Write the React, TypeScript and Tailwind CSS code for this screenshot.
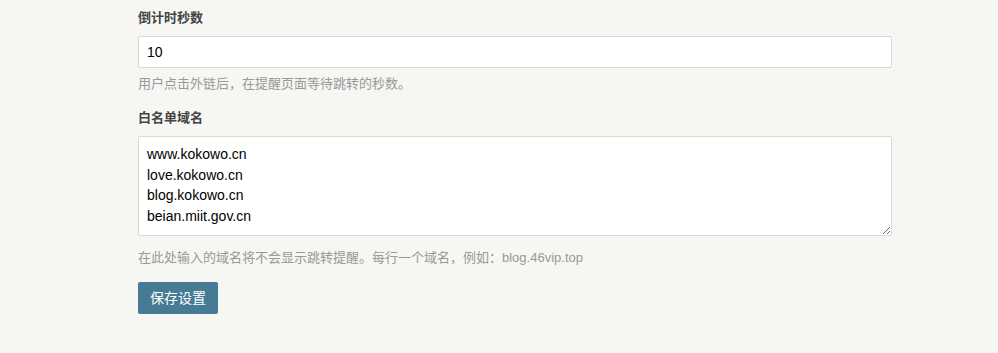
import React from "react";

export default function App() {
  const font = { fontFamily: '"Liberation Sans", Arial, "Noto Sans CJK SC", sans-serif' };
  return (
    <div className="min-h-[353px] w-full bg-[#f6f6f3]" style={font}>
      <div className="pl-[138px] pt-[8px] w-[892px]">
        <div className="flex flex-col">
          <label className="text-[13px] font-bold text-[#444] leading-[20px]">倒计时秒数</label>
          <input
            readOnly
            value="10"
            className="mt-[8px] h-[32px] w-[754px] border border-[#d9d9d6] bg-white px-[8px] text-[14px] text-black outline-none rounded-[2px]"
          />
          <p className="mt-[6px] text-[13px] text-[#999] leading-[20px]">用户点击外链后，在提醒页面等待跳转的秒数。</p>
        </div>
        <div className="mt-[14px] flex flex-col">
          <label className="text-[13px] font-bold text-[#444] leading-[20px]">白名单域名</label>
          <textarea
            readOnly
            value={"www.kokowo.cn\nlove.kokowo.cn\nblog.kokowo.cn\nbeian.miit.gov.cn"}
            className="mt-[8px] h-[100px] w-[754px] border border-[#d9d9d6] bg-white px-[8px] py-[7px] text-[14px] leading-[20.5px] text-black outline-none rounded-[2px] resize-y"
          />
          <p className="mt-[12px] text-[13px] text-[#999] leading-[20px]">在此处输入的域名将不会显示跳转提醒。每行一个域名，例如：blog.46vip.top</p>
        </div>
        <button className="mt-[14px] h-[32px] w-[80px] rounded-[2px] bg-[#467b96] text-[14px] font-normal text-white">保存设置</button>
      </div>
    </div>
  );
}
